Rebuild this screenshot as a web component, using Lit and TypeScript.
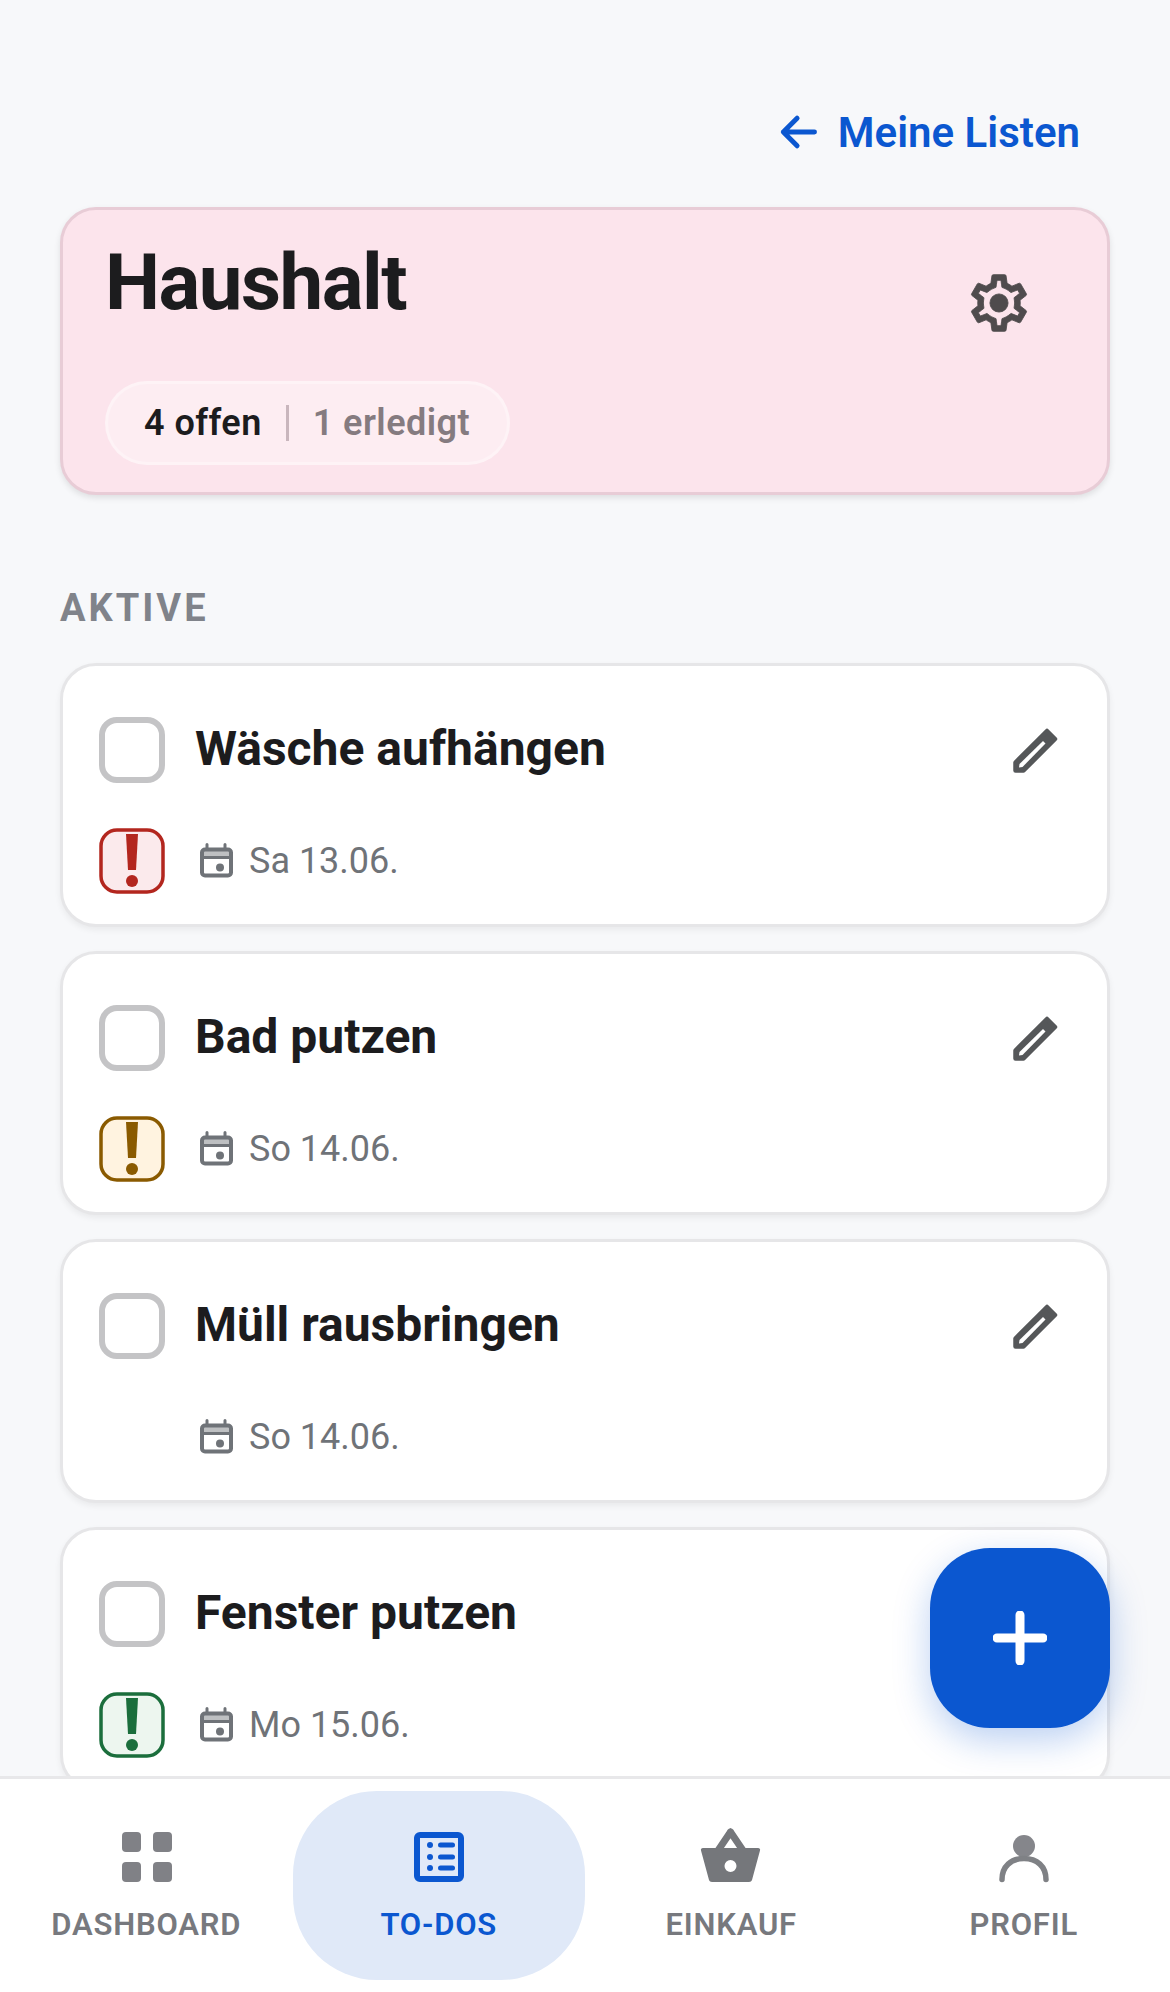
import { LitElement, html, css, svg } from "lit";
import { customElement } from "lit/decorators.js";

const todos = [
  { title: "Wäsche aufhängen", date: "Sa 13.06.", prio: "high" },
  { title: "Bad putzen", date: "So 14.06.", prio: "mid" },
  { title: "Müll rausbringen", date: "So 14.06.", prio: "" },
  { title: "Fenster putzen", date: "Mo 15.06.", prio: "low" },
];

const gear = svg`<path d="M19.43 12.98c.04-.32.07-.64.07-.98 0-.34-.03-.66-.07-.98l2.11-1.65c.19-.15.24-.42.12-.64l-2-3.46c-.09-.16-.26-.25-.44-.25-.06 0-.12.01-.17.03l-2.49 1c-.52-.4-1.08-.73-1.69-.98l-.38-2.65C14.46 2.18 14.25 2 14 2h-4c-.25 0-.46.18-.49.42l-.38 2.65c-.61.25-1.17.59-1.69.98l-2.49-1c-.06-.02-.12-.03-.18-.03-.17 0-.34.09-.43.25l-2 3.46c-.13.22-.07.49.12.64l2.11 1.65c-.04.32-.07.65-.07.98 0 .33.03.66.07.98l-2.11 1.65c-.19.15-.24.42-.12.64l2 3.46c.09.16.26.25.44.25.06 0 .12-.01.17-.03l2.49-1c.52.4 1.08.73 1.69.98l.38 2.65c.03.24.24.42.49.42h4c.25 0 .46-.18.49-.42l.38-2.65c.61-.25 1.17-.59 1.69-.98l2.49 1c.06.02.12.03.18.03.17 0 .34-.09.43-.25l2-3.46c.12-.22.07-.49-.12-.64l-2.11-1.65zm-1.98-1.71c.04.31.05.52.05.73 0 .21-.02.43-.05.73l-.14 1.13.89.7 1.08.84-.7 1.21-1.27-.51-1.04-.42-.9.68c-.43.32-.84.56-1.25.73l-1.06.43-.16 1.13-.2 1.35h-1.4l-.19-1.35-.16-1.13-1.06-.43c-.43-.18-.83-.41-1.23-.71l-.91-.7-1.06.43-1.27.51-.7-1.21 1.08-.84.89-.7-.14-1.13c-.03-.31-.05-.54-.05-.74s.02-.43.05-.73l.14-1.13-.89-.7-1.08-.84.7-1.21 1.27.51 1.04.42.9-.68c.43-.32.84-.56 1.25-.73l1.06-.43.16-1.13.2-1.35h1.39l.19 1.35.16 1.13 1.06.43c.43.18.83.41 1.23.71l.91.7 1.06-.43 1.27-.51.7 1.21-1.07.85-.89.7.14 1.13z"/><circle cx="12" cy="12" r="3.2"/>`;

@customElement("app-root")
export class AppRoot extends LitElement {
  static styles = css`
    :host { display: block; font-family: Roboto, "Liberation Sans", sans-serif; }
    * { box-sizing: border-box; }
    .page { position: relative; height: 1992px; overflow: hidden; background: #f7f8fa; }
    .content { padding: 108px 60px 0; display: flex; flex-direction: column; }
    .back { align-self: flex-end; display: flex; align-items: center; gap: 18px; padding-right: 30px; height: 48px; color: #0b57d0; font-size: 42px; font-weight: 600; line-height: 48px; }
    .back span { position: relative; top: 1px; }
    .back svg { width: 44px; height: 44px; fill: none; stroke: #0b57d0; stroke-width: 2.7; stroke-linecap: round; stroke-linejoin: round; }
    .hero { margin-top: 51px; height: 288px; border-radius: 36px; background: #fce4ec; border: 3px solid #e8ccd6; box-shadow: 0 3px 6px rgba(0,0,0,.1); padding: 31px 42px 0; display: flex; flex-direction: column; }
    .hero-top { display: flex; justify-content: space-between; align-items: flex-start; height: 125px; }
    h1 { margin: 0; font-size: 78px; line-height: 84px; font-weight: 700; color: #1c1c1e; letter-spacing: -1.5px; }
    .gear { width: 68px; height: 68px; fill: #4f4b4d; stroke: #4f4b4d; stroke-width: .3; stroke-linejoin: round; margin: 28px 32px 0 0; }
    .stats { margin-top: 15px; align-self: flex-start; height: 84px; border-radius: 42px; background: rgba(255,255,255,.35); border: 3px solid rgba(255,255,255,.3); padding: 0 37px 0 36px; display: flex; align-items: center; font-size: 36px; font-weight: 600; letter-spacing: .45px; }
    .open { color: #1c1c1e; }
    .sep { width: 3px; height: 36px; background: #c9b6bd; margin: 0 24px; }
    .done { color: #857b80; }
    .section { margin: 92px 0 0; height: 42px; line-height: 42px; font-size: 38px; font-weight: 700; letter-spacing: 3px; color: #80838a; }
    .list { margin-top: 34px; display: flex; flex-direction: column; gap: 24px; }
    .card { height: 264px; flex: none; border-radius: 36px; background: #fff; border: 3px solid #e6e6e8; box-shadow: 0 3px 6px rgba(0,0,0,.06); padding: 51px 36px 0; }
    .row1 { display: flex; align-items: center; height: 66px; }
    .check { width: 66px; height: 66px; flex: none; border: 6px solid #c4c4c6; border-radius: 18px; background: #fff; }
    .title { position: relative; top: -2px; margin-left: 30px; flex: 1; font-size: 48px; font-weight: 700; color: #1c1c1e; white-space: nowrap; }
    .pencil { width: 46px; height: 46px; margin-right: 12px; display: block; }
    .row2 { display: flex; align-items: center; height: 66px; margin-top: 45px; }
    .prio { width: 66px; height: 66px; flex: none; display: block; }
    .date { display: flex; align-items: center; margin-left: 30px; font-size: 36px; color: #6f7378; }
    .date svg { width: 43px; height: 43px; margin-right: 11px; }
    .date-only { margin-left: 96px; }
    .fab { position: absolute; left: 930px; top: 1548px; width: 180px; height: 180px; border-radius: 60px; background: #0b57d0; box-shadow: 0 12px 36px rgba(11,87,208,.28); display: flex; align-items: center; justify-content: center; }
    .fab svg { width: 54px; height: 54px; stroke: #fff; stroke-width: 9; stroke-linecap: round; fill: none; }
    nav { position: absolute; left: 0; right: 0; bottom: 0; height: 216px; background: #fff; border-top: 3px solid #e8e8ea; display: grid; grid-template-columns: repeat(4, 1fr); padding: 12px 0; }
    .tab { display: flex; flex-direction: column; align-items: center; border-radius: 84px; color: #77797e; font-size: 31px; font-weight: 600; letter-spacing: .8px; padding-top: 36px; }
    .tab.active { background: #e0e9f8; color: #0b57d0; }
    .tab svg { width: 66px; height: 60px; display: block; }
    .tab span { margin-top: 20px; line-height: 36px; }
  `;

  private prio(kind: string) {
    const c: Record<string, [string, string]> = {
      high: ["#b3261e", "#fbeaec"],
      mid: ["#8a5a00", "#fff3e0"],
      low: ["#1b6e3c", "#edf6ef"],
    };
    const [fg, bg] = c[kind];
    return html`<svg class="prio" viewBox="0 0 66 66">
      <rect x="2" y="2" width="62" height="62" rx="16" fill=${bg} stroke=${fg} stroke-width="3.500"/>
      <path d="M27 6h12l-2 36h-8z" fill=${fg}/>
      <circle cx="33" cy="53" r="6" fill=${fg}/>
    </svg>`;
  }

  private card(t: { title: string; date: string; prio: string }) {
    return html`<div class="card">
      <div class="row1">
        <div class="check"></div>
        <div class="title">${t.title}</div>
        <svg class="pencil" viewBox="0 0 46 46">
          <path d="M2.500 35.500L34 4 42 12 10.500 43.500H2.500Z" fill="#555759" stroke="#555759" stroke-width="4.500" stroke-linejoin="round"/>
          <path d="M6 40.500L6.500 37 30 14 32.500 16.500 9.500 40Z" fill="#fff"/>
        </svg>
      </div>
      <div class="row2">
        ${t.prio ? this.prio(t.prio) : ""}
        <div class="date ${t.prio ? "" : "date-only"}">
          <svg viewBox="0 0 43 43">
            <path d="M7 17h29v-4.500a3 3 0 0 0-3-3H10a3 3 0 0 0-3 3z" fill="#6f7378" fill-opacity=".45"/>
            <rect x="7" y="9.500" width="29" height="26" rx="3" fill="none" stroke="#6f7378" stroke-width="4"/>
            <path d="M7 17.500h29" stroke="#6f7378" stroke-width="3"/>
            <path d="M12 9V4.500M30 9V4.500" stroke="#6f7378" stroke-width="3" stroke-linecap="round"/>
            <circle cx="25" cy="27.500" r="4" fill="#6f7378"/>
          </svg>
          ${t.date}
        </div>
      </div>
    </div>`;
  }

  render() {
    return html`<div class="page">
      <div class="content">
        <div class="back">
          <svg viewBox="0 0 24 24"><path d="M21 12H4M11.500 4.500L4 12l7.500 7.500"/></svg>
          <span>Meine Listen</span>
        </div>
        <div class="hero">
          <div class="hero-top">
            <h1>Haushalt</h1>
            <svg class="gear" viewBox="0 0 24 24">${gear}</svg>
          </div>
          <div class="stats"><span class="open">4 offen</span><i class="sep"></i><span class="done">1 erledigt</span></div>
        </div>
        <div class="section">AKTIVE</div>
        <div class="list">${todos.map((t) => this.card(t))}</div>
      </div>
      <div class="fab"><svg viewBox="0 0 54 54"><path d="M27 4v46M4 27h46"/></svg></div>
      <nav>
        <div class="tab">
          <svg viewBox="0 0 66 60" fill="#808186"><rect x="9" y="5" width="19" height="20" rx="4"/><rect x="40" y="5" width="19" height="20" rx="4"/><rect x="9" y="35" width="19" height="20" rx="4"/><rect x="40" y="35" width="19" height="20" rx="4"/></svg>
          <span>DASHBOARD</span>
        </div>
        <div class="tab active">
          <svg viewBox="0 0 66 60"><rect x="11" y="8" width="44" height="44" rx="3" fill="none" stroke="#0b57d0" stroke-width="6"/><g fill="#0b57d0"><circle cx="24" cy="18" r="3"/><circle cx="24" cy="30" r="3"/><circle cx="24" cy="41" r="3"/><rect x="32" y="15.500" width="17" height="5" rx="2.500"/><rect x="32" y="27.500" width="17" height="5" rx="2.500"/><rect x="32" y="38.500" width="17" height="5" rx="2.500"/></g></svg>
          <span>TO-DOS</span>
        </div>
        <div class="tab">
          <svg viewBox="0 0 66 60" style="overflow:visible"><path d="M32.500 5L19 25M32.500 5L46 25" stroke="#75777b" stroke-width="7" stroke-linecap="round" fill="none"/><path fill-rule="evenodd" fill="#75777b" d="M5 21h55c1.500 0 2.500 1 2 2.500L54 53c-.4 1.300-1.500 2-3 2H14c-1.500 0-2.600-.7-3-2L3 23.500C2.500 22 3.500 21 5 21zM32.500 33a6 6 0 1 0 0 12a6 6 0 0 0 0-12z"/></svg>
          <span>EINKAUF</span>
        </div>
        <div class="tab">
          <svg viewBox="0 0 66 60"><circle cx="33" cy="19" r="11" fill="#85868b"/><path d="M11 52.500c0-13 9-21 22-21s22 8 22 21" fill="none" stroke="#7f8185" stroke-width="5.500" stroke-linecap="round"/></svg>
          <span>PROFIL</span>
        </div>
      </nav>
    </div>`;
  }
}
